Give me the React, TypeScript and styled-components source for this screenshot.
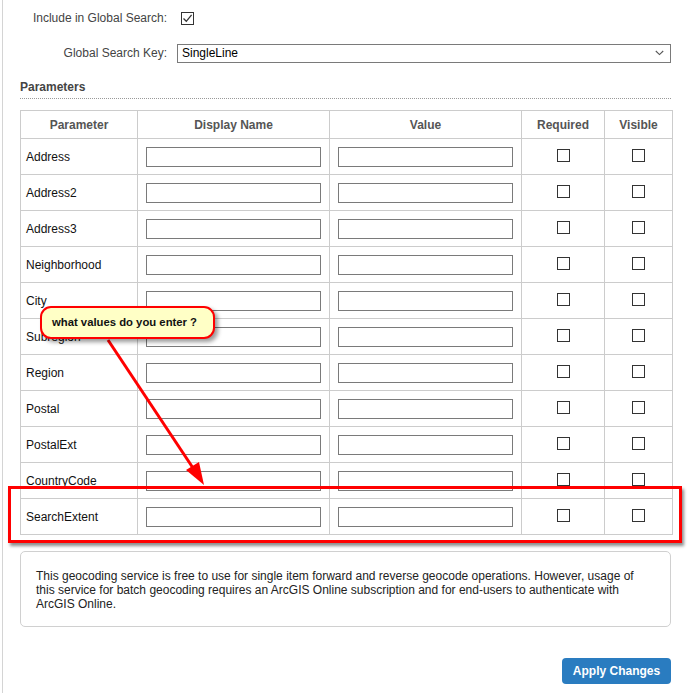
import React from "react";
import styled, { createGlobalStyle } from "styled-components";

const GlobalStyle = createGlobalStyle`
  html, body {
    margin: 0;
    padding: 0;
    background: #fff;
    overflow: hidden;
  }
  body {
    font-family: "Liberation Sans", Arial, sans-serif;
    font-size: 12px;
    color: #222;
  }
`;

const Page = styled.div`
  position: relative;
  width: 689px;
  height: 693px;
`;

const Panel = styled.div`
  margin-left: 2px;
  height: 100%;
  box-sizing: border-box;
  border-left: 1px solid #d4d4d4;
  padding: 8px 18px 0 17px;
  display: flex;
  flex-direction: column;
`;

const Form = styled.div`
  display: grid;
  grid-template-columns: 147px 1fr;
  column-gap: 10px;
  row-gap: 15px;
  align-items: center;
`;

const Label = styled.label`
  text-align: right;
  color: #444;
  line-height: 20px;
`;

const CheckBox = styled.span<{ $inset?: number }>`
  display: inline-flex;
  align-items: center;
  justify-content: center;
  width: 13px;
  height: 13px;
  box-sizing: border-box;
  border: 1px solid #333;
  background: #fff;
  margin-left: ${(p) => p.$inset ?? 0}px;
`;

const CheckRow = styled.div`
  display: flex;
  align-items: center;
  height: 20px;
`;

const Select = styled.div`
  height: 19px;
  box-sizing: border-box;
  border: 1px solid #7a7a7a;
  display: flex;
  align-items: center;
  justify-content: space-between;
  padding: 0 6px 0 4px;
  color: #000;
  font-size: 12px;
`;

const Heading = styled.div`
  margin-top: 17px;
  font-weight: bold;
  color: #444;
  line-height: 15px;
  padding-bottom: 3px;
  border-bottom: 1px dotted #999;
`;

const Table = styled.table`
  margin-top: 11px;
  width: 651px;
  border-collapse: collapse;
  table-layout: fixed;
`;

const Th = styled.th<{ $w: number }>`
  width: ${(p) => p.$w}px;
  height: 27px;
  padding: 0;
  border: 1px solid #ccc;
  color: #555;
  font-weight: bold;
  font-size: 12px;
  text-align: center;
`;

const Td = styled.td<{ $center?: boolean }>`
  height: 35px;
  padding: 0 0 0 ${(p) => (p.$center ? 0 : 5)}px;
  border: 1px solid #ccc;
  color: #111;
  text-align: ${(p) => (p.$center ? "center" : "left")};
  vertical-align: middle;
`;

const InputCell = styled.td`
  height: 35px;
  padding: 0 0 0 8px;
  border: 1px solid #ccc;
  vertical-align: middle;
`;

const TextInput = styled.div`
  width: 175px;
  height: 20px;
  box-sizing: border-box;
  border: 1px solid #7a7a7a;
  background: #fff;
`;

const Info = styled.div`
  margin-top: 16px;
  border: 1px solid #d0d0d0;
  border-radius: 5px;
  padding: 17px 15px 15px 15px;
  line-height: 14px;
  color: #222;
  font-size: 12px;
`;

const Footer = styled.div`
  display: flex;
  justify-content: flex-end;
  margin-top: 31px;
`;

const Button = styled.button`
  width: 109px;
  height: 26px;
  border: none;
  border-radius: 4px;
  background: #2a7cc0;
  color: #fff;
  font-family: "Liberation Sans", Arial, sans-serif;
  font-weight: bold;
  font-size: 12px;
  padding: 0;
`;

/* annotation layer drawn on top of the form */
const Highlight = styled.div`
  position: absolute;
  left: 8px;
  top: 486px;
  width: 674px;
  height: 57px;
  box-sizing: border-box;
  border: 3px solid #f00;
  box-shadow: 2px 3px 3px rgba(0, 0, 0, 0.45);
  pointer-events: none;
`;

const Callout = styled.div`
  position: absolute;
  left: 40px;
  top: 306px;
  width: 175px;
  height: 33px;
  box-sizing: border-box;
  border: 2px solid #f00;
  border-radius: 11px;
  background: #ffffc6;
  box-shadow: 3px 3px 4px rgba(0, 0, 0, 0.4);
  font-weight: bold;
  font-size: 11.3px;
  color: #111;
  padding-left: 10px;
  line-height: 29px;
  white-space: nowrap;
`;

const ArrowLayer = styled.svg`
  position: absolute;
  left: 0;
  top: 0;
  pointer-events: none;
`;

const Check = () => (
  <svg width="11" height="11" viewBox="0 0 11 11">
    <path d="M1.5 5.5 L4.3 8.3 L9.6 1.8" fill="none" stroke="#333" strokeWidth="1.3" />
  </svg>
);

const Chevron = () => (
  <svg width="9" height="6" viewBox="0 0 9 6">
    <path d="M0.8 1 L4.5 4.6 L8.2 1" fill="none" stroke="#555" strokeWidth="1.1" />
  </svg>
);

const params = [
  "Address",
  "Address2",
  "Address3",
  "Neighborhood",
  "City",
  "Subregion",
  "Region",
  "Postal",
  "PostalExt",
  "CountryCode",
  "SearchExtent",
];

export default function App() {
  return (
    <>
      <GlobalStyle />
      <Page>
        <Panel>
          <Form>
            <Label>Include in Global Search:</Label>
            <CheckRow>
              <CheckBox $inset={4}>
                <Check />
              </CheckBox>
            </CheckRow>
            <Label>Global Search Key:</Label>
            <Select>
              <span>SingleLine</span>
              <Chevron />
            </Select>
          </Form>

          <Heading>Parameters</Heading>

          <Table>
            <thead>
              <tr>
                <Th $w={116}>Parameter</Th>
                <Th $w={191}>Display Name</Th>
                <Th $w={191}>Value</Th>
                <Th $w={82}>Required</Th>
                <Th $w={67}>Visible</Th>
              </tr>
            </thead>
            <tbody>
              {params.map((p) => (
                <tr key={p}>
                  <Td>{p}</Td>
                  <InputCell>
                    <TextInput />
                  </InputCell>
                  <InputCell>
                    <TextInput />
                  </InputCell>
                  <Td $center>
                    <CheckBox />
                  </Td>
                  <Td $center>
                    <CheckBox />
                  </Td>
                </tr>
              ))}
            </tbody>
          </Table>

          <Info>
            This geocoding service is free to use for single item forward and reverse geocode operations. However, usage
            of this service for batch geocoding requires an ArcGIS Online subscription and for end-users to authenticate
            with ArcGIS Online.
          </Info>

          <Footer>
            <Button>Apply Changes</Button>
          </Footer>
        </Panel>

        <Highlight />
        <ArrowLayer width="689" height="693" viewBox="0 0 689 693">
          <line x1="108" y1="340" x2="193" y2="468" stroke="#f00" strokeWidth="3" />
          <polygon points="204,485 186,470 199,462" fill="#f00" />
        </ArrowLayer>
        <Callout>what values do you enter ?</Callout>
      </Page>
    </>
  );
}
